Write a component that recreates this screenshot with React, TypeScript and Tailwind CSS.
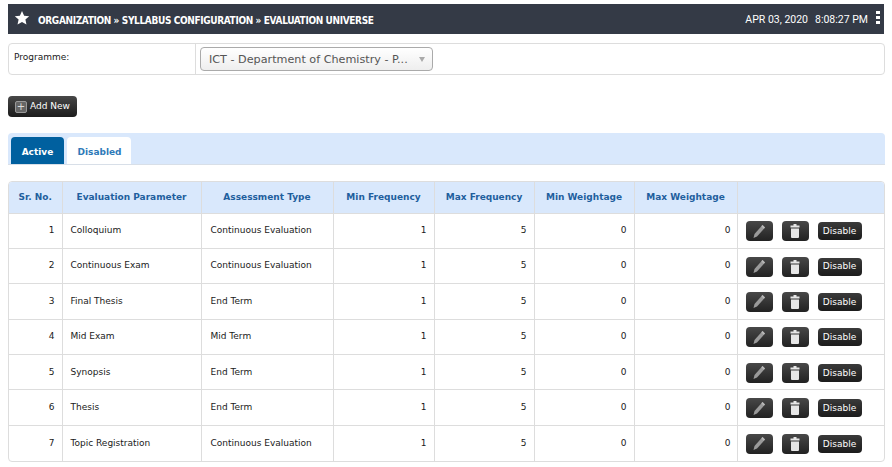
import React from "react";

const rows = [
  ["1", "Colloquium", "Continuous Evaluation"],
  ["2", "Continuous Exam", "Continuous Evaluation"],
  ["3", "Final Thesis", "End Term"],
  ["4", "Mid Exam", "Mid Term"],
  ["5", "Synopsis", "End Term"],
  ["6", "Thesis", "End Term"],
  ["7", "Topic Registration", "Continuous Evaluation"],
];

const heads = ["Sr. No.", "Evaluation Parameter", "Assessment Type", "Min Frequency", "Max Frequency", "Min Weightage", "Max Weightage", ""];
const widths = ["w-[53px]", "w-[139px]", "w-[132px]", "w-[101px]", "w-[100px]", "w-[100px]", "w-[103px]", "w-[149px]"];

function Pencil() {
  return (
    <svg width="14" height="15" viewBox="0 0 14 15">
      <path d="M10.5 1 L13 3.5 L5 12.5 L1.5 14 L2.5 10 Z" fill="#9a9a9a" />
      <path d="M10.5 1 L13 3.5 L11.8 4.8 L9.3 2.3 Z" fill="#b8b8b8" />
    </svg>
  );
}

function Trash() {
  return (
    <svg width="10" height="14" viewBox="0 0 10 14">
      <path d="M3.5 0 H6.5 V1.5 H9.5 V3.5 H0.5 V1.5 H3.5 Z M1 4.5 H9 V13 Q9 14 8 14 H2 Q1 14 1 13 Z" fill="#e6e6e6" />
    </svg>
  );
}

function IconButton({ children }: { children: React.ReactNode }) {
  return (
    <button className="flex h-[20px] w-[27px] items-center justify-center rounded-[4px] bg-gradient-to-b from-[#484848] to-[#222222]">
      {children}
    </button>
  );
}

export default function App() {
  return (
    <div className="h-[467px] w-[892px] overflow-hidden bg-white px-2 pt-1 font-['DejaVu_Sans',sans-serif] text-[9px] text-[#1a1a1a]">
      <header className="flex h-[30px] w-[876px] items-center justify-between bg-[#343a46] pl-[6px] pr-[4px] text-white">
        <div className="flex items-center gap-[8px]">
          <svg className="mb-[2px]" width="16" height="16" viewBox="0 0 24 24" fill="white"><path d="M12 1.5l3.2 7 7.6.8-5.7 5.1 1.6 7.5L12 18.1l-6.7 3.8 1.6-7.5L1.2 9.3l7.6-.8z" /></svg>
          <span className="pt-[2px] font-['DejaVu_Sans_Condensed','Liberation_Sans',sans-serif] text-[10px] font-bold tracking-[-0.36px]">ORGANIZATION » SYLLABUS CONFIGURATION » EVALUATION UNIVERSE</span>
        </div>
        <div className="flex items-center gap-[8px] font-['Roboto',sans-serif] text-[10.5px]">
          <div className="flex items-center gap-[7px]">
            <span className="pt-[1px]">APR 03, 2020</span>
            <span className="pt-[1px]">8:08:27 PM</span>
          </div>
          <span className="mb-[3px] flex w-[4px] flex-col gap-[2px]">
            <span className="h-[3px] bg-white" />
            <span className="h-[3px] bg-white" />
            <span className="h-[3px] bg-white" />
          </span>
        </div>
      </header>

      <section className="mt-[9px] flex h-[32px] w-[877px] rounded-[4px] border border-[#dddddd]">
        <div className="w-[187px] border-r border-[#dddddd] pl-[5px] pt-[7px]">Programme:</div>
        <div className="pl-[4px] pt-[3px]">
          <div className="flex h-[24px] w-[233px] items-center justify-between rounded-[4px] border border-[#aaaaaa] bg-gradient-to-b from-[#ffffff] to-[#eeeeee] pl-[8px] pr-[7px] text-[11.2px] text-[#555555]">
            <span className="whitespace-nowrap pt-[2px]">ICT - Department of Chemistry - P...</span>
            <span className="h-0 w-0 border-x-[3px] border-t-[5px] border-x-transparent border-t-[#aaaaaa]" />
          </div>
        </div>
      </section>

      <button className="mt-[21px] flex h-[21px] w-[69px] items-center gap-[3px] rounded-[4px] bg-gradient-to-b from-[#484848] to-[#1c1c1c] pl-[7px] text-white">
        <span className="flex h-[12px] w-[12px] items-center justify-center rounded-[2px] border border-[#999999] bg-[#666666] text-[10px] leading-none text-[#dddddd]">+</span>
        <span>Add New</span>
      </button>

      <nav className="mt-[16px] flex h-[32px] w-[877px] items-end gap-[3px] rounded-t-[4px] border-b border-[#d8dfe8] bg-[#d9e8fc] pl-[3px]">
        <div className="flex h-[27px] w-[53px] items-center justify-center rounded-t-[4px] bg-[#00609f] pt-[4px] font-bold text-white">Active</div>
        <div className="flex h-[27px] w-[64px] items-center justify-center rounded-t-[4px] bg-white pl-[1px] pt-[4px] font-bold text-[#2e7ab8]">Disabled</div>
      </nav>

      <div className="mt-[16px] w-[877px] overflow-hidden rounded-[4px] border border-[#dddddd]">
        <table className="w-full table-fixed border-collapse">
          <thead>
            <tr className="h-[31px] bg-[#d9e8fc]">
              {heads.map((h, i) => (
                <th key={i} className={`${widths[i]} border-l border-[#dddddd] text-center font-bold text-[#1f5f9e] first:border-l-0`}>{h}</th>
              ))}
            </tr>
          </thead>
          <tbody>
            {rows.map((r) => (
              <tr key={r[0]} className="h-[35.4px] border-t border-[#dddddd]">
                <td className="pr-[7px] text-right">{r[0]}</td>
                <td className="border-l border-[#dddddd] pl-[8px]">{r[1]}</td>
                <td className="border-l border-[#dddddd] pl-[9px]">{r[2]}</td>
                <td className="border-l border-[#dddddd] pr-[7px] text-right">1</td>
                <td className="border-l border-[#dddddd] pr-[7px] text-right">5</td>
                <td className="border-l border-[#dddddd] pr-[7px] text-right">0</td>
                <td className="border-l border-[#dddddd] pr-[6px] text-right">0</td>
                <td className="border-l border-[#dddddd] pl-[8px] pt-[1px]">
                  <div className="flex items-center gap-[9px]">
                    <IconButton><Pencil /></IconButton>
                    <IconButton><Trash /></IconButton>
                    <button className="h-[18px] w-[44px] rounded-[4px] bg-gradient-to-b from-[#3a3a3a] to-[#1c1c1c] pt-[1px] text-white">Disable</button>
                  </div>
                </td>
              </tr>
            ))}
          </tbody>
        </table>
      </div>
    </div>
  );
}
